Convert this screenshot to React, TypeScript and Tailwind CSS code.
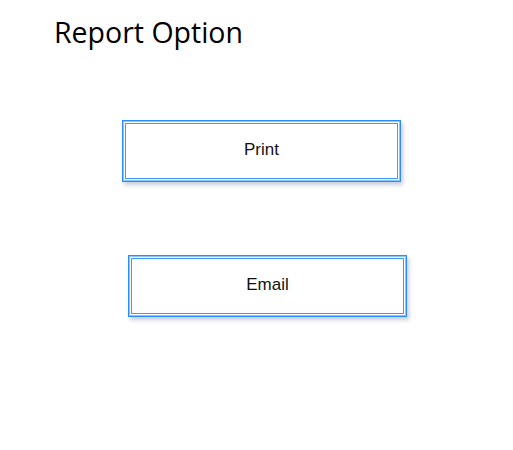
const buttonClass =
  "w-[279px] h-[62px] bg-white border border-[#2b8cff] shadow-[inset_0_0_0_1px_#8cc4ff,inset_0_0_0_2px_#ffffff,inset_0_0_0_3px_#3d9bff,2px_3px_4px_rgba(40,60,100,0.25)] text-[17px] text-[#111] flex items-center justify-center";

export default function App() {
  return (
    <div className="w-[513px] h-[450px] bg-white relative" style={{ fontFamily: '"Liberation Sans", Arial, sans-serif' }}>
      {/* Title */}
      <h1 className="pl-[54px] pt-[12px] text-[28.5px] leading-[40px] text-black" style={{ fontFamily: '"Open Sans", "Noto Sans", sans-serif' }}>
        Report Option
      </h1>

      {/* Options */}
      <div className="flex flex-col pt-[68px]">
        <button className={`${buttonClass} ml-[122px] pb-[2px]`}>Print</button>
        <button className={`${buttonClass} ml-[128px] mt-[73px] pb-[2px]`}>Email</button>
      </div>
    </div>
  );
}
